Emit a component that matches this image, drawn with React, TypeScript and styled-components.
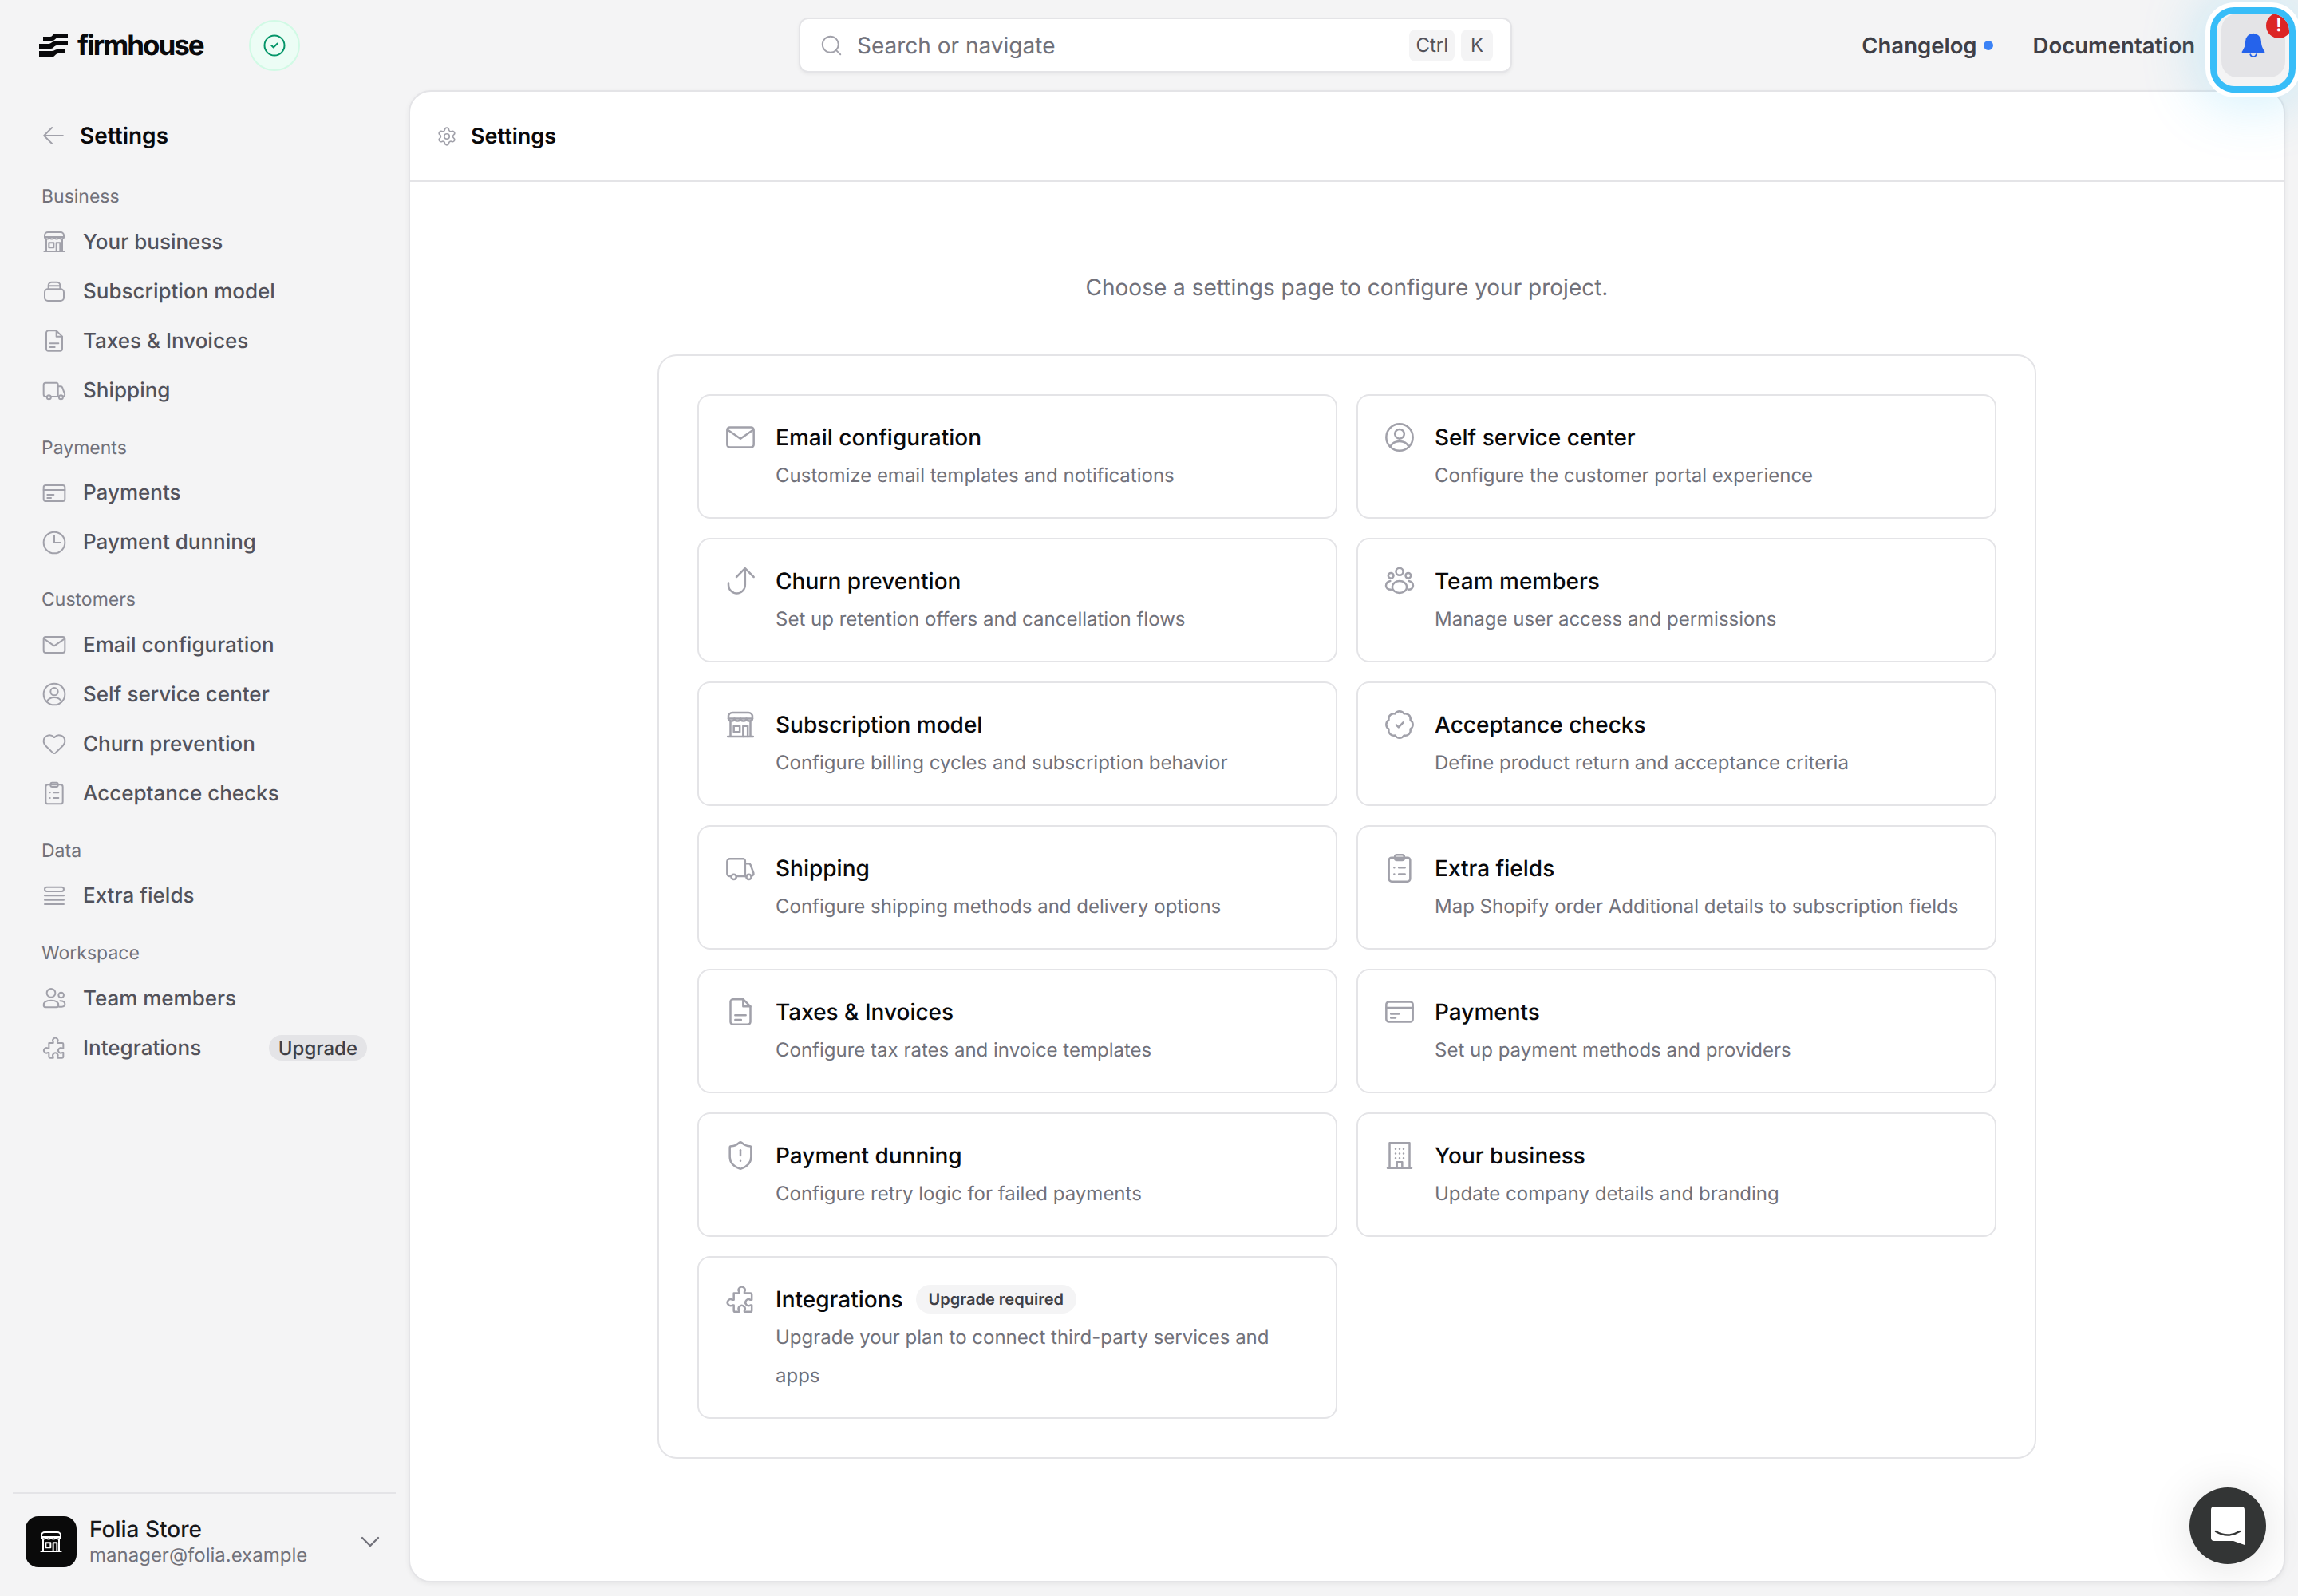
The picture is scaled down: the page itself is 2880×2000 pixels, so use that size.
import React from 'react';
import styled, { createGlobalStyle } from 'styled-components';
import { ChevronDown, CircleCheck, Heart, Search, Settings, ShieldAlert } from 'lucide-react';

const GlobalStyle = createGlobalStyle`
  html, body {
    margin: 0;
    padding: 0;
    background: #f4f4f5;
  }
  body {
    font-family: Inter, "Liberation Sans", sans-serif;
    text-rendering: geometricPrecision;
  }
  * {
    box-sizing: border-box;
  }
`;

const Page = styled.div`
  width: 2880px;
  height: 2000px;
  position: relative;
  overflow: hidden;
  display: flex;
  flex-direction: column;
  background: #f4f4f5;
`;

/* top bar */
const TopBar = styled.header`
  height: 113px;
  flex: none;
  display: grid;
  grid-template-columns: 1fr 894px 1fr;
  align-items: center;
  padding: 0 16px 0 32px;
`;

const Brand = styled.div`
  display: flex;
  align-items: center;
  padding-left: 17px;
`;

const BrandName = styled.span`
  font-size: 35px;
  font-weight: 700;
  letter-spacing: -2px;
  color: #09090b;
  margin-left: 12px;
  line-height: 40px;
`;

const StatusDot = styled.div`
  width: 64px;
  height: 64px;
  margin-left: 57px;
  border-radius: 50%;
  border: 2px solid #d1fae5;
  background: #ecfdf5;
  color: #059669;
  display: flex;
  align-items: center;
  justify-content: center;
`;

const SearchBox = styled.div`
  height: 69px;
  display: flex;
  align-items: center;
  padding: 0 22px 0 24px;
  background: #fff;
  border: 2px solid #e4e4e7;
  border-radius: 12px;
  box-shadow: 0 2px 4px rgba(0, 0, 0, 0.05);
  color: #a1a1aa;
`;

const SearchText = styled.span`
  flex: 1;
  margin-left: 17px;
  font-size: 28px;
  color: #71717a;
`;

const Key = styled.kbd`
  height: 40px;
  min-width: 40px;
  padding: 0 8px;
  margin-left: 8px;
  display: flex;
  align-items: center;
  justify-content: center;
  border-radius: 8px;
  background: #f4f4f5;
  font-family: inherit;
  font-size: 24px;
  color: #52525b;
`;

const TopLinks = styled.nav`
  display: flex;
  align-items: center;
  justify-content: flex-end;
`;

const TopLink = styled.span`
  font-size: 27.5px;
  font-weight: 600;
  color: #3f3f46;
`;

const NewDot = styled.i`
  width: 12px;
  height: 12px;
  margin: 0 50px 0 8px;
  border-radius: 50%;
  background: #3b82f6;
`;

const BellWrap = styled.div`
  position: relative;
  margin-left: 33px;
  z-index: 3;
`;

const BellButton = styled.button`
  width: 80px;
  height: 80px;
  padding: 0;
  border: 0;
  border-radius: 20px;
  background: #e4e4e7;
  display: flex;
  align-items: center;
  justify-content: center;
`;

const BellBadge = styled.span`
  position: absolute;
  top: -1px;
  right: -8px;
  width: 32px;
  height: 32px;
  border-radius: 50%;
  background: #dc2626;
  color: #fff;
  font-size: 22px;
  font-weight: 700;
  line-height: 32px;
  text-align: center;
`;

const Ring = styled.div`
  position: absolute;
  top: 0;
  left: -6px;
  width: 91px;
  height: 91px;
  border-radius: 22px;
  box-shadow:
    0 0 0 8px #38bdf8,
    0 0 0 14px #fff,
    0 0 70px 24px rgba(56, 189, 248, 0.22);
  pointer-events: none;
`;

/* below the bar */
const Body = styled.div`
  flex: 1;
  min-height: 0;
  display: flex;
`;

const Sidebar = styled.aside`
  width: 512px;
  flex: none;
  display: flex;
  flex-direction: column;
  padding: 0 16px;
`;

const BackRow = styled.div`
  height: 62px;
  margin-top: 26px;
  padding-left: 36px;
  display: flex;
  align-items: center;
  gap: 18px;
  color: #a1a1aa;
`;

const BackTitle = styled.span`
  font-size: 28px;
  font-weight: 600;
  color: #09090b;
`;

const NavSection = styled.section`
  margin-top: 24.5px;

  &:first-of-type {
    margin-top: 29px;
  }
`;

const NavLabel = styled.div`
  height: 32px;
  margin-bottom: 10px;
  padding-left: 36px;
  font-size: 23px;
  line-height: 32px;
  color: #71717a;
`;

const NavItem = styled.div`
  height: 62px;
  padding: 0 36px;
  display: flex;
  align-items: center;
  gap: 20px;
  font-size: 26px;
  font-weight: 500;
  color: #52525b;

  svg {
    color: #a1a1aa;
    flex: none;
  }
`;

const UpgradePill = styled.span`
  margin-left: auto;
  height: 32px;
  padding: 0 12px;
  display: flex;
  align-items: center;
  border-radius: 16px;
  background: #e4e4e7;
  font-size: 24px;
  font-weight: 500;
  color: #3f3f46;
`;

const Account = styled.div`
  margin-top: auto;
  height: 130px;
  padding: 28px 12px 0 16px;
  border-top: 2px solid #e4e4e7;
  display: flex;
  align-items: flex-start;
`;

const Avatar = styled.div`
  width: 64px;
  height: 64px;
  flex: none;
  border-radius: 16px;
  background: #0a0a0a;
  color: #fff;
  display: flex;
  align-items: center;
  justify-content: center;
`;

const AccountText = styled.div`
  flex: 1;
  margin-left: 16px;
`;

const AccountName = styled.div`
  font-size: 28px;
  font-weight: 500;
  line-height: 32px;
  color: #18181b;
`;

const AccountMail = styled.div`
  font-size: 24px;
  line-height: 34px;
  color: #71717a;
`;

const AccountChevron = styled.div`
  align-self: center;
  margin-bottom: 36px;
  color: #71717a;
  display: flex;
`;

const Main = styled.main`
  flex: 1;
  min-width: 0;
  margin: 0 16px 17px 0;
  background: #fff;
  border: 2px solid #e4e4e7;
  border-radius: 28px;
  box-shadow: 0 2px 6px rgba(0, 0, 0, 0.06);
`;

const MainHeader = styled.div`
  height: 113px;
  padding-left: 33px;
  border-bottom: 2px solid #e4e4e7;
  display: flex;
  align-items: center;
  gap: 17px;
  color: #a1a1aa;
`;

const MainTitle = styled.h1`
  margin: 0;
  font-size: 27px;
  font-weight: 600;
  color: #09090b;
`;

const Intro = styled.p`
  margin: 108px 0 60px;
  font-size: 28px;
  line-height: 48px;
  text-align: center;
  color: #71717a;
`;

const Panel = styled.div`
  width: 1728px;
  margin: 0 auto;
  padding: 48px;
  border: 2px solid #e4e4e7;
  border-radius: 24px;
  display: grid;
  grid-template-columns: 1fr 1fr;
  gap: 24px;
  align-items: start;
`;

const Card = styled.div`
  padding: 32px 32px 28px;
  border: 2px solid #e4e4e7;
  border-radius: 16px;
  display: flex;
  gap: 24px;

  > svg {
    flex: none;
    color: #a1a1aa;
  }
`;

const CardTitleRow = styled.div`
  height: 40px;
  display: flex;
  align-items: center;
  gap: 16px;
`;

const CardTitle = styled.div`
  font-size: 28px;
  font-weight: 500;
  color: #09090b;
`;

const CardPill = styled.span`
  height: 36px;
  padding: 0 16px;
  display: flex;
  align-items: center;
  border-radius: 18px;
  background: #f4f4f5;
  font-size: 20px;
  font-weight: 600;
  color: #3f3f46;
`;

const CardText = styled.div`
  margin-top: 4px;
  font-size: 24px;
  line-height: 48px;
  color: #71717a;
`;

const ChatButton = styled.div`
  position: absolute;
  right: 40px;
  bottom: 40px;
  width: 96px;
  height: 96px;
  border-radius: 50%;
  background: #333535;
  box-shadow: 0 4px 60px rgba(0, 0, 0, 0.12);
  display: flex;
  align-items: center;
  justify-content: center;
`;

type IconProps = { size?: number };

const Glyph: React.FC<IconProps & { children: React.ReactNode }> = ({ size = 32, children }) => (
  <svg
    width={size}
    height={size}
    viewBox="0 0 24 24"
    fill="none"
    stroke="currentColor"
    strokeWidth={1.5}
    strokeLinecap="round"
    strokeLinejoin="round"
  >
    {children}
  </svg>
);

const BackIcon = (p: IconProps) => (
  <Glyph {...p}>
    <path d="M2.500 12h19M10.500 4l-8 8 8 8" />
  </Glyph>
);

const StoreIcon = (p: IconProps) => (
  <Glyph {...p}>
    <path d="M3 6a3 3 0 0 1 3-3h12a3 3 0 0 1 3 3v1.500H3Z" />
    <path d="M3 7.500c0 2.400 4.500 2.400 4.500 0 0 2.400 4.500 2.400 4.500 0 0 2.400 4.500 2.400 4.500 0 0 2.400 4.500 2.400 4.500 0" />
    <path d="M4.500 10v11M19.500 10v11M2.500 21h19" />
    <path d="M7 13h4.500v4.500H7zM14 21v-8h3.500v8" />
  </Glyph>
);

const BoxIcon = (p: IconProps) => (
  <Glyph {...p}>
    <rect x="3" y="10" width="18" height="11" rx="3" />
    <path d="M6.500 10V6.500a3 3 0 0 1 3-3h5a3 3 0 0 1 3 3V10M6.500 7h11" />
  </Glyph>
);

const FileIcon = (p: IconProps) => (
  <Glyph {...p}>
    <path d="M14 2.500H6.500a2 2 0 0 0-2 2v15a2 2 0 0 0 2 2h11a2 2 0 0 0 2-2V8Z" />
    <path d="M14 2.500V8h5.500M8 14.500h8M8 18h4.500" />
  </Glyph>
);

const TruckIcon = (p: IconProps) => (
  <Glyph {...p}>
    <path d="M5 18H4a2 2 0 0 1-2-2V7a2 2 0 0 1 2-2h10a1.500 1.500 0 0 1 1.500 1.500V18H9" />
    <path d="M15.500 8.500h2.700a1.500 1.500 0 0 1 1.400 1l2.200 6a2 2 0 0 1-1.800 2.500M15.500 18h1" />
    <circle cx="7" cy="18.500" r="1.900" />
    <circle cx="18.300" cy="18.500" r="1.900" />
  </Glyph>
);

const CardIcon = (p: IconProps) => (
  <Glyph {...p}>
    <rect x="2" y="4.500" width="20" height="15" rx="2" />
    <path d="M2 9h20M5.500 13.500h6M5.500 16.500h3.500" />
  </Glyph>
);

const ClockIcon = (p: IconProps) => (
  <Glyph {...p}>
    <circle cx="12" cy="12" r="10" />
    <path d="M12 5.500V12h6" />
  </Glyph>
);

const MailIcon = (p: IconProps) => (
  <Glyph {...p}>
    <rect x="2" y="4.500" width="20" height="15" rx="2" />
    <path d="M2.500 6.500 12 13l9.500-6.500" />
  </Glyph>
);

const UserCircleIcon = (p: IconProps) => (
  <Glyph {...p}>
    <circle cx="12" cy="12" r="10" />
    <circle cx="12" cy="9.500" r="3.500" />
    <path d="M5 19c1.500-2.800 4-4 7-4s5.500 1.200 7 4" />
  </Glyph>
);

const ClipboardIcon = (p: IconProps) => (
  <Glyph {...p}>
    <rect x="4" y="4" width="16" height="18" rx="2" />
    <rect x="8.500" y="2" width="7" height="4" rx="1.500" />
    <path d="M8 11.500h.01M11.500 11.500H16M8 16.500h.01M11.500 16.500H16" />
  </Glyph>
);

const RowsIcon = (p: IconProps) => (
  <Glyph {...p}>
    <rect x="3" y="3.500" width="18" height="4" rx="2" />
    <path d="M3 11.500h18M3 15.500h18M3 19.500h18" />
  </Glyph>
);

const UsersIcon = (p: IconProps) => (
  <Glyph {...p}>
    <circle cx="9" cy="7" r="4" />
    <circle cx="18.500" cy="9" r="2.500" />
    <path d="M2 18.500c0-3 3-4.500 7-4.500s7 1.500 7 4.500c0 1.500-1 2-2.500 2h-9C3 20.500 2 20 2 18.500Z" />
    <path d="M17.500 14.500c2.500 0 4.500 1 4.500 3s-1.500 2.500-3 2.500h-2.500" />
  </Glyph>
);

const PuzzleIcon = (p: IconProps) => (
  <Glyph {...p}>
    <path d="M7 7.500h4v-1A2.400 2.400 0 1 1 15 6.500v1h4.500a1 1 0 0 1 1 1v4h-1A2.400 2.400 0 1 0 19.500 16.500h1v4a1 1 0 0 1-1 1H15v-1A2.400 2.400 0 1 0 11 20.500v1H8a1 1 0 0 1-1-1v-4H6A2.400 2.400 0 1 1 6 12.500h1Z" />
  </Glyph>
);

const ChurnIcon = (p: IconProps) => (
  <Glyph {...p}>
    <path d="M3 13.500V15a6.250 6.250 0 0 0 12.500 0V3" />
    <path d="M9 9l6.500-6.500L22 9" />
  </Glyph>
);

const TeamIcon = (p: IconProps) => (
  <Glyph {...p}>
    <circle cx="12" cy="5" r="2.700" />
    <circle cx="5.500" cy="8" r="2" />
    <circle cx="18.500" cy="8" r="2" />
    <ellipse cx="12" cy="16.500" rx="5.500" ry="4.500" />
    <path d="M5 12c-2 .5-3.200 2-3.200 3.500S3 18.500 5.500 18.500M19 12c2 .5 3.200 2 3.200 3.500S21 18.500 18.500 18.500" />
  </Glyph>
);

const BadgeIcon = (p: IconProps) => (
  <Glyph {...p}>
    <path d="M3.850 8.620a4 4 0 0 1 4.780-4.770 4 4 0 0 1 6.740 0 4 4 0 0 1 4.780 4.780 4 4 0 0 1 0 6.740 4 4 0 0 1-4.770 4.780 4 4 0 0 1-6.750 0 4 4 0 0 1-4.780-4.770 4 4 0 0 1 0-6.760Z" />
    <path d="m9.500 12.200 1.800 1.800 3.400-3.600" />
  </Glyph>
);

const BuildingIcon = (p: IconProps) => (
  <Glyph {...p}>
    <path d="M4.500 2.500h15v19h-15zM3 21.500h18" />
    <path d="M10 21.500V17h4v4.500" />
    <path d="M9 7h.01M12 7h.01M15 7h.01M9 10.500h.01M12 10.500h.01M15 10.500h.01M9 14h.01M12 14h.01M15 14h.01" />
  </Glyph>
);

const LogoMark = () => (
  <svg width="36" height="30" viewBox="0 0 36 30" fill="#09090b">
    <path d="M5 4h9c3 0 3-4 7-4h15v5H24c-3 0-4 4-8 4H5Z" />
    <path d="M0 13h12c3 0 4-3 7-3h17v5H22c-3 0-4 4-7 4H0Z" />
    <path d="M0 22h16c3 0 4-2 7-2h10v5h-9c-3 0-5 5-9 5H0Z" />
  </svg>
);

const BellIcon = () => (
  <svg width="36" height="36" viewBox="0 0 24 24" fill="#2563eb" stroke="#2563eb" strokeWidth={1.2} strokeLinejoin="round">
    <path d="M12 2.500a6 6 0 0 0-6 6c0 5-1.500 6.500-3 9h18c-1.500-2.500-3-4-3-9a6 6 0 0 0-6-6Z" />
    <path d="M9.500 19.500a2.600 2.600 0 0 0 5 0" fill="none" strokeLinecap="round" />
  </svg>
);

const ChatIcon = () => (
  <svg width="42" height="48" viewBox="0 0 42 48">
    <path d="M4 0h34a4 4 0 0 1 4 4v44l-14-5H4a4 4 0 0 1-4-4V4a4 4 0 0 1 4-4Z" fill="#fff" />
    <path d="M6 31c10 6 20 6 30 0" fill="none" stroke="#333535" strokeWidth="2.500" strokeLinecap="round" />
  </svg>
);

type NavEntry = { label: string; icon: React.ReactNode; badge?: string };

const navSections: { title: string; items: NavEntry[] }[] = [
  {
    title: 'Business',
    items: [
      { label: 'Your business', icon: <StoreIcon /> },
      { label: 'Subscription model', icon: <BoxIcon /> },
      { label: 'Taxes & Invoices', icon: <FileIcon /> },
      { label: 'Shipping', icon: <TruckIcon /> },
    ],
  },
  {
    title: 'Payments',
    items: [
      { label: 'Payments', icon: <CardIcon /> },
      { label: 'Payment dunning', icon: <ClockIcon /> },
    ],
  },
  {
    title: 'Customers',
    items: [
      { label: 'Email configuration', icon: <MailIcon /> },
      { label: 'Self service center', icon: <UserCircleIcon /> },
      { label: 'Churn prevention', icon: <Heart size={32} strokeWidth={1.5} /> },
      { label: 'Acceptance checks', icon: <ClipboardIcon /> },
    ],
  },
  {
    title: 'Data',
    items: [{ label: 'Extra fields', icon: <RowsIcon /> }],
  },
  {
    title: 'Workspace',
    items: [
      { label: 'Team members', icon: <UsersIcon /> },
      { label: 'Integrations', icon: <PuzzleIcon />, badge: 'Upgrade' },
    ],
  },
];

type CardEntry = { title: string; text: string; icon: React.ReactNode; pill?: string };

const cards: CardEntry[] = [
  { title: 'Email configuration', text: 'Customize email templates and notifications', icon: <MailIcon size={40} /> },
  { title: 'Self service center', text: 'Configure the customer portal experience', icon: <UserCircleIcon size={40} /> },
  { title: 'Churn prevention', text: 'Set up retention offers and cancellation flows', icon: <ChurnIcon size={40} /> },
  { title: 'Team members', text: 'Manage user access and permissions', icon: <TeamIcon size={40} /> },
  { title: 'Subscription model', text: 'Configure billing cycles and subscription behavior', icon: <StoreIcon size={40} /> },
  { title: 'Acceptance checks', text: 'Define product return and acceptance criteria', icon: <BadgeIcon size={40} /> },
  { title: 'Shipping', text: 'Configure shipping methods and delivery options', icon: <TruckIcon size={40} /> },
  { title: 'Extra fields', text: 'Map Shopify order Additional details to subscription fields', icon: <ClipboardIcon size={40} /> },
  { title: 'Taxes & Invoices', text: 'Configure tax rates and invoice templates', icon: <FileIcon size={40} /> },
  { title: 'Payments', text: 'Set up payment methods and providers', icon: <CardIcon size={40} /> },
  { title: 'Payment dunning', text: 'Configure retry logic for failed payments', icon: <ShieldAlert size={40} strokeWidth={1.5} /> },
  { title: 'Your business', text: 'Update company details and branding', icon: <BuildingIcon size={40} /> },
  {
    title: 'Integrations',
    text: 'Upgrade your plan to connect third-party services and apps',
    icon: <PuzzleIcon size={40} />,
    pill: 'Upgrade required',
  },
];

export default function App() {
  return (
    <Page>
      <GlobalStyle />
      <TopBar>
        <Brand>
          <LogoMark />
          <BrandName>firmhouse</BrandName>
          <StatusDot>
            <CircleCheck size={30} strokeWidth={1.6} />
          </StatusDot>
        </Brand>
        <SearchBox>
          <Search size={30} strokeWidth={1.5} />
          <SearchText>Search or navigate</SearchText>
          <Key>Ctrl</Key>
          <Key>K</Key>
        </SearchBox>
        <TopLinks>
          <TopLink>Changelog</TopLink>
          <NewDot />
          <TopLink>Documentation</TopLink>
          <BellWrap>
            <BellButton>
              <BellIcon />
            </BellButton>
            <BellBadge>!</BellBadge>
            <Ring />
          </BellWrap>
        </TopLinks>
      </TopBar>
      <Body>
        <Sidebar>
          <BackRow>
            <BackIcon size={30} />
            <BackTitle>Settings</BackTitle>
          </BackRow>
          {navSections.map((section) => (
            <NavSection key={section.title}>
              <NavLabel>{section.title}</NavLabel>
              {section.items.map((item) => (
                <NavItem key={item.label}>
                  {item.icon}
                  {item.label}
                  {item.badge && <UpgradePill>{item.badge}</UpgradePill>}
                </NavItem>
              ))}
            </NavSection>
          ))}
          <Account>
            <Avatar>
              <StoreIcon size={32} />
            </Avatar>
            <AccountText>
              <AccountName>Folia Store</AccountName>
              <AccountMail>manager@folia.example</AccountMail>
            </AccountText>
            <AccountChevron>
              <ChevronDown size={40} strokeWidth={1.4} />
            </AccountChevron>
          </Account>
        </Sidebar>
        <Main>
          <MainHeader>
            <Settings size={26} strokeWidth={1.5} />
            <MainTitle>Settings</MainTitle>
          </MainHeader>
          <Intro>Choose a settings page to configure your project.</Intro>
          <Panel>
            {cards.map((card) => (
              <Card key={card.title}>
                {card.icon}
                <div>
                  <CardTitleRow>
                    <CardTitle>{card.title}</CardTitle>
                    {card.pill && <CardPill>{card.pill}</CardPill>}
                  </CardTitleRow>
                  <CardText>{card.text}</CardText>
                </div>
              </Card>
            ))}
          </Panel>
        </Main>
      </Body>
      <ChatButton>
        <ChatIcon />
      </ChatButton>
    </Page>
  );
}
